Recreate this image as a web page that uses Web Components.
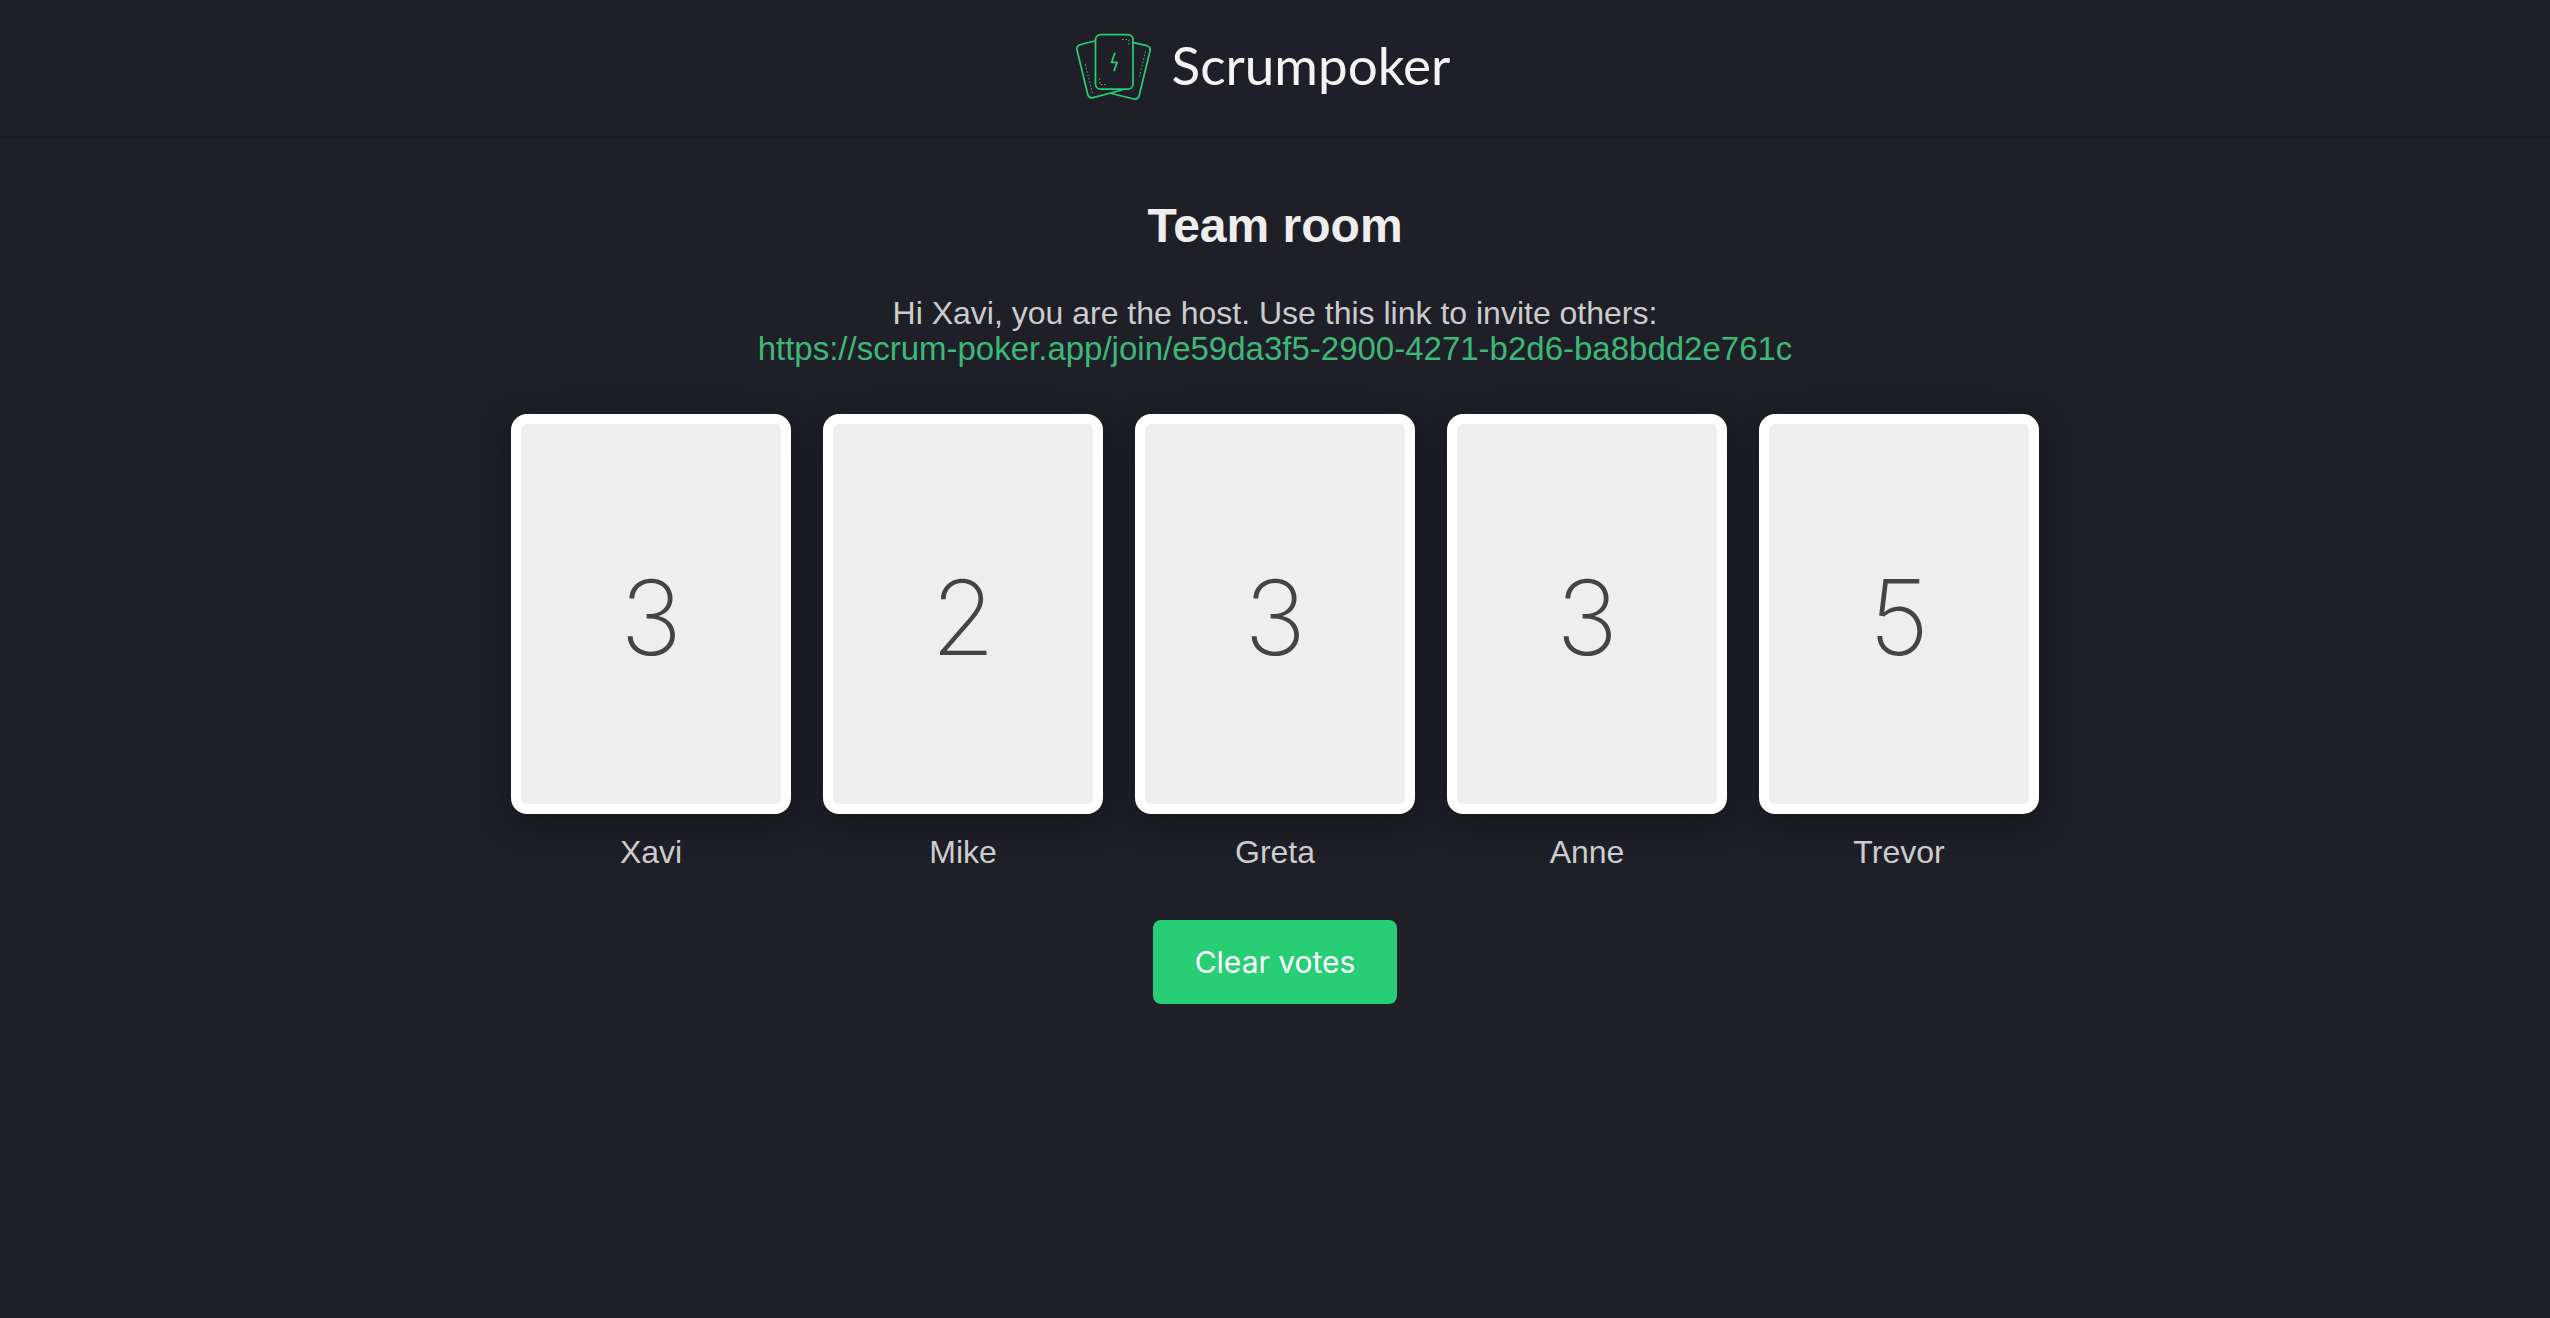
<!DOCTYPE html>
<html lang="en">
<head>
<meta charset="utf-8">
<title>Scrumpoker</title>
<style>
  body { margin: 0; min-height: 100vh; background: #1f1f28; color: #cccccc; font: 32px/36px "Liberation Sans", Arial, sans-serif; }
</style>
</head>
<body>
<poker-header></poker-header>
<poker-room name="Team room">
  <span slot="intro">Hi Xavi, you are the host. Use this link to invite others:</span>
  <invite-link slot="intro" url="https://scrum-poker.app/join/e59da3f5-2900-4271-b2d6-ba8bdd2e761c"></invite-link>
  <vote-card value="3">Xavi</vote-card>
  <vote-card value="2">Mike</vote-card>
  <vote-card value="3">Greta</vote-card>
  <vote-card value="3">Anne</vote-card>
  <vote-card value="5">Trevor</vote-card>
  <poker-button slot="actions">Clear votes</poker-button>
</poker-room>
<script>
const define = (name, render) => customElements.define(name, class extends HTMLElement {
  constructor() { super(); this.attachShadow({ mode: "open" }); }
  connectedCallback() { this.shadowRoot.innerHTML = render(this); }
});

define("poker-logo", () => `
  <style>
    :host { display: block; }
    svg { display: block; width: 76px; height: 68px; fill: none; stroke: #27ce75; stroke-width: 1.7; stroke-linecap: round; stroke-linejoin: round; }
    .dots { stroke-width: 1; stroke-dasharray: 1.5 2; stroke-linecap: butt; }
  </style>
  <svg viewBox="0 0 76 68" aria-hidden="true">
    <path d="M18.5 8 L4 11.7 Q.2 12.9 1 17 L11.8 61.5 Q13 65.6 17 64.6 L46 57"/>
    <path d="M57.5 9.7 L71 12.7 Q75 13.8 74 18 L63.2 62.5 Q62 66.8 57.8 66 L35.5 60.5"/>
    <rect x="19.5" y="1.7" width="37.5" height="54.5" rx="5"/>
    <path d="M38.7 20.3 L35.6 29.4 H41.1 L38.2 37.4"/>
    <path class="dots" d="M46 6.5 H52.8 V13.5 M23.7 45.5 V51.5 H31 M9.3 31.5 L16.5 60 M69.5 18.5 L63.5 43.5"/>
  </svg>`);

define("poker-header", () => `
  <style>
    :host { display: block; border-bottom: 2px solid #1c1c24; }
    header { display: flex; justify-content: center; gap: 20px; padding: 33px 24px 35px 0; }
    .name { color: #f4f4f4; font: 53px/64px Lato, sans-serif; }
  </style>
  <header><poker-logo></poker-logo><span class="name">Scrumpoker</span></header>`);

define("poker-room", (el) => `
  <style>
    :host { display: block; padding: 60px 32px; text-align: center; }
    main { display: flex; flex-direction: column; align-items: center; }
    h1 { margin: 0; color: #eeeeee; font-size: 48px; line-height: 56px; }
    .intro { display: flex; flex-direction: column; margin: 41px 0 47px; }
    .cards { display: flex; flex-wrap: wrap; justify-content: center; gap: 32px; }
    .actions { margin-top: 50px; }
  </style>
  <main>
    <h1>${el.getAttribute("name")}</h1>
    <div class="intro"><slot name="intro"></slot></div>
    <div class="cards"><slot></slot></div>
    <div class="actions"><slot name="actions"></slot></div>
  </main>`);

define("invite-link", (el) => `
  <style>
    :host { display: block; font-size: 33px; }
    a { color: #3cb878; text-decoration: none; overflow-wrap: anywhere; }
  </style>
  <a href="${el.getAttribute("url")}">${el.getAttribute("url")}</a>`);

define("vote-card", (el) => `
  <style>
    :host { display: flex; flex-direction: column; gap: 20px; }
    .card { display: flex; align-items: center; justify-content: center; box-sizing: border-box; width: 280px; height: 400px; padding-top: 6px; border: 10px solid #ffffff; border-radius: 16px; background: #eeeeee; color: #444444; font: 200 104px/120px Inter, sans-serif; box-shadow: 0 8px 32px rgba(0, 0, 0, .35); }
  </style>
  <div class="card">${el.getAttribute("value")}</div>
  <div><slot></slot></div>`);

define("poker-button", () => `
  <style>
    :host { display: block; }
    button { display: block; margin: 0; padding: 22px 42px; border: 0; border-radius: 8px; background: #27ce75; color: #ffffff; font: 30px/40px Inter, sans-serif; cursor: pointer; }
  </style>
  <button type="button"><slot></slot></button>`);
</script>
</body>
</html>
